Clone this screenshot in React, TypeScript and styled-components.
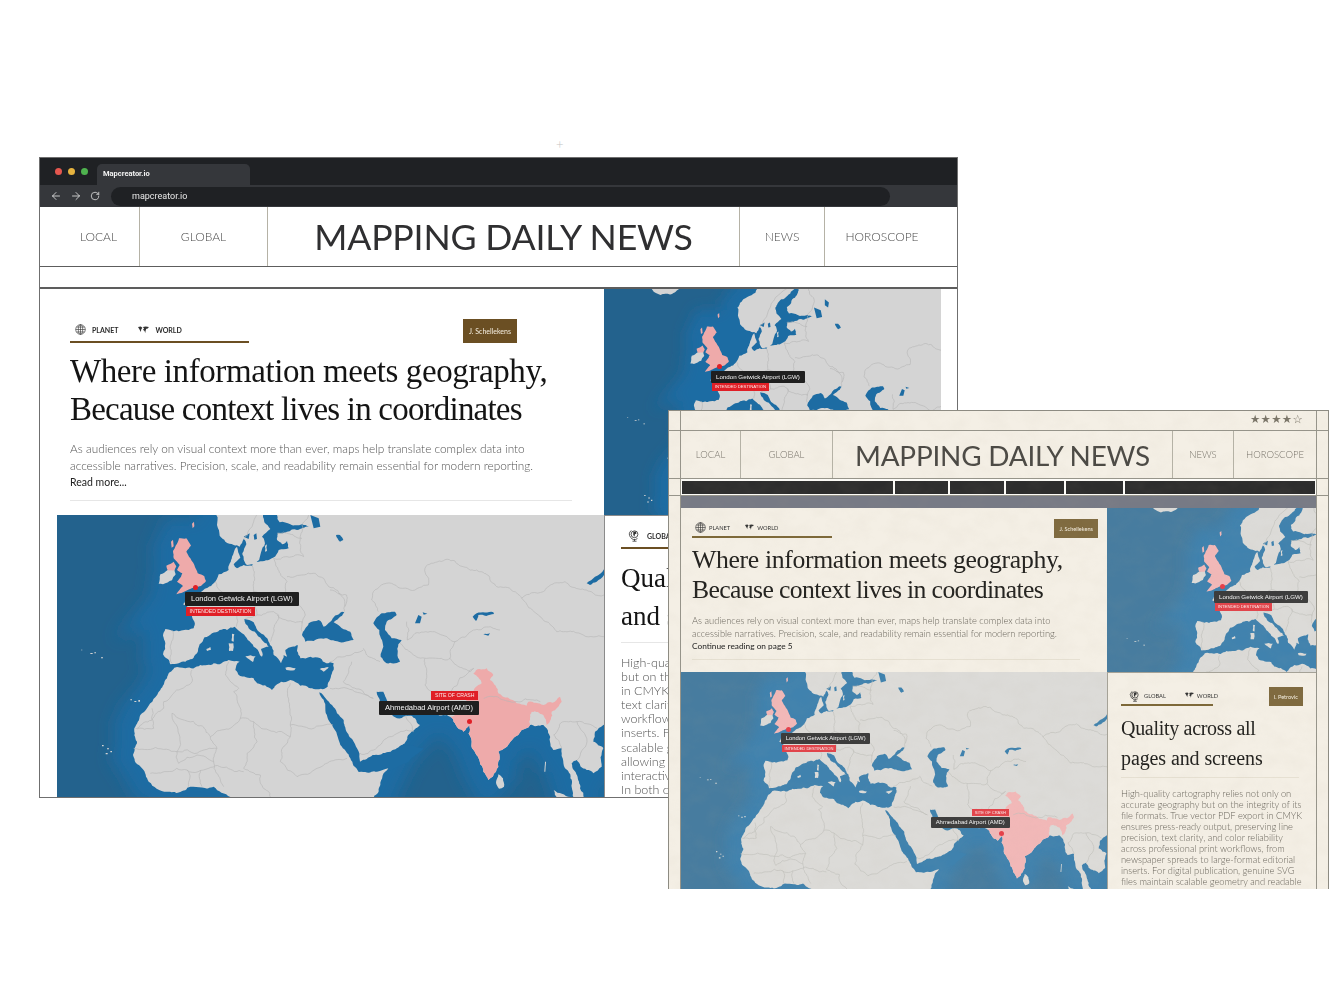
import React, { useId } from "react";
import styled, { createGlobalStyle } from "styled-components";
import { ArrowLeft, ArrowRight, RotateCw } from "lucide-react";

const Global = createGlobalStyle`
  html, body { margin: 0; padding: 0; background: #fff; }
  body { font-family: "Lato", "Liberation Sans", sans-serif; }
`;

/* ---------- map geometry, in one shared drawing space ---------- */
const LAND =
  "M600,-130 L552,-70 L500,-30 L478,0 L480,30 L488,62 L505,80 L530,90 L548,95 L560,72 L568,88 L556,115 L570,150 L596,146 L610,120 L622,92 L615,65 L640,42 L622,22 L618,0 L640,-30 L680,-62 L694,-72 L705,-65 L680,-30 L660,0 L668,22 L700,28 L735,28 L756,34 L720,45 L690,50 L663,55 L660,75 L675,88 L690,78 L695,100 L665,105 L648,128 L605,140 L585,152 L560,150 L540,160 L530,148 L550,128 L540,95 L525,125 L515,165 L485,178 L470,205 L452,218 L425,240 L385,255 L378,268 L398,285 L405,300 L410,340 L395,345 L325,342 L318,362 L325,385 L318,418 L340,448 L365,445 L385,440 L420,415 L428,388 L465,355 L488,345 L510,345 L533,335 L555,355 L590,395 L608,418 L615,425 L612,402 L635,395 L605,365 L575,340 L562,312 L590,322 L625,365 L645,395 L650,420 L672,445 L680,420 L690,425 L685,405 L705,395 L722,390 L720,408 L730,430 L760,425 L790,430 L808,445 L830,445 L826,470 L812,515 L770,522 L730,512 L700,495 L672,500 L645,525 L600,505 L590,490 L545,480 L535,465 L548,440 L515,435 L470,445 L430,450 L385,460 L352,458 L330,490 L310,525 L270,580 L250,600 L232,640 L240,680 L228,720 L255,760 L275,800 L330,830 L400,815 L470,815 L520,846 L560,880 L949,880 L970,810 L994,760 L960,770 L920,770 L905,765 L909,745 L989,715 L1034,692 L1089,630 L1074,610 L1044,590 L1069,600 L1159,600 L1179,605 L1194,625 L1219,650 L1237,630 L1244,680 L1279,770 L1294,795 L1317,770 L1324,710 L1394,645 L1419,630 L1459,630 L1479,680 L1489,705 L1514,700 L1524,760 L1549,846 L1564,880 L1589,880 L1569,820 L1544,745 L1559,735 L1589,765 L1609,775 L1634,755 L1639,700 L1609,680 L1614,650 L1639,630 L1700,620 L1700,-130 Z";

const ISLANDS = [
  "M150,-80 L190,-92 L240,-90 L262,-66 L230,-48 L195,-46 L170,-58 Z",
  "M305,206 L310,178 L332,165 L352,162 L356,178 L345,196 L318,208 Z",
  "M525,356 L532,358 L530,380 L524,378 Z",
  "M515,385 L529,385 L528,408 L516,408 Z",
  "M565,424 L596,424 L588,441 Z",
  "M685,458 L716,460 L712,466 L688,465 Z",
  "M788,462 L815,456 L800,470 Z",
  "M448,402 L460,396 L462,404 L450,408 Z",
  "M1324,778 L1338,790 L1341,815 L1326,821 L1317,802 Z",
  "M566,128 L580,132 L578,146 L566,144 Z",
  "M624,92 L630,88 L630,108 L624,110 Z",
  "M1020,745 L1034,744 L1030,749 Z",
  "M220,553 h5 v3 h-5 Z M232,558 h6 v3 h-6 Z M244,555 h5 v5 h-5 Z",
  "M72,404 h4 v2 h-4 Z M100,414 h7 v3 h-7 Z M112,412 h5 v3 h-5 Z M132,427 h6 v3 h-6 Z",
  "M135,690 h5 v4 h-5 Z M150,700 h6 v3 h-6 Z M146,714 h6 v4 h-6 Z M160,708 h5 v4 h-5 Z",
  "M1464,740 l3,0 l-2,30 l-3,0 Z",
  "M1490,825 L1540,846 L1540,880 L1510,880 Z",
];

const WATER = [
  "M787,532 L825,570 L860,615 L890,680 L909,740 L989,712 L1034,690 L1100,700 L1000,768 L994,756 L920,771 L905,771 L880,730 L850,690 L825,630 L805,580 Z",
  "M959,530 L979,530 L997,565 L1019,590 L1044,590 L1060,598 L1075,604 L1020,610 L989,585 L969,560 Z",
  "M949,325 L974,295 L1014,290 L1019,300 L989,320 L984,345 L1004,370 L1034,375 L1024,388 L1029,440 L989,445 L971,425 L979,395 L967,345 Z",
  "M735,360 L755,325 L785,315 L800,335 L820,320 L855,290 L862,292 L845,310 L830,322 L880,350 L890,375 L860,382 L810,370 L770,378 L745,380 Z",
  "M1074,325 L1084,300 L1094,305 L1089,325 Z M1097,292 L1111,296 L1100,299 Z",
  "M1247,305 L1259,295 L1309,292 L1311,297 L1264,300 L1257,318 Z",
  "M1279,358 L1299,355 L1294,362 Z",
  "M1589,205 L1614,185 L1641,163 L1641,180 L1619,200 L1599,210 Z",
  "M837,60 L849,60 L859,75 L849,80 Z",
  "M560,65 L578,55 L575,72 Z M590,60 L598,55 L600,72 L592,74 Z",
  "M760,0 L785,10 L790,35 L770,40 Z M800,-30 L815,-18 L812,0 L800,-8 Z",
];

const BORDERS = [
  "M345,345 L340,400 L345,445",
  "M475,200 L510,250 L530,270 L538,335",
  "M585,152 L590,230 L575,240 L530,270",
  "M650,130 L690,200 L680,250 L620,235 L590,230",
  "M735,30 L730,70 L740,125 L690,125 L650,130",
  "M690,185 L775,175 L815,215 L860,250 L862,290",
  "M680,250 L720,265 L745,300 L735,325",
  "M660,300 L735,320 L735,350",
  "M600,300 L650,290 L665,300 L650,340 L640,380",
  "M575,240 L600,300 L565,310",
  "M735,28 L760,-30 L740,-70 L750,-130",
  "M560,72 L590,20 L615,-30 L660,-70 L700,-130",
  "M694,-72 L720,-130",
  "M660,55 L735,70",
  "M819,225 L869,240 L864,275",
  "M944,255 L949,230 L1004,205 L1059,225 L1114,210 L1104,160 L1194,138 L1259,165 L1319,215 L1394,250 L1444,300 L1499,350 L1579,360 L1641,365",
  "M1394,250 L1459,230 L1524,200 L1609,235 L1641,240",
  "M944,255 L964,290",
  "M1049,320 L1051,375 L1074,355 L1174,370 L1194,380 L1249,345 L1329,345",
  "M919,400 L929,420 L969,440",
  "M1104,430 L1109,465 L1104,510 L1124,530",
  "M1029,385 L1109,430 L1179,430 L1194,380",
  "M1179,430 L1240,470 L1250,460 L1180,530 L1124,530",
  "M819,440 L919,405",
  "M884,440 L859,500 L949,550",
  "M819,520 L949,550",
  "M909,715 L989,670 L1069,650 L1044,590",
  "M405,465 L405,500 L320,560 L320,580 L240,640",
  "M515,440 L505,480 L545,520 L530,530 L550,610",
  "M700,505 L700,630 L828,630",
  "M590,620 L700,665 L700,630",
  "M460,665 L550,610 L590,620",
  "M345,595 L460,665 L480,700 L360,710 L345,595",
  "M235,640 L290,640 L285,580",
  "M480,700 L470,740 L420,720 L365,745 L360,710",
  "M230,700 L360,710",
  "M700,665 L670,740 L720,785 L780,760 L870,730",
  "M590,620 L600,680 L560,760 L610,780 L640,846",
  "M280,775 L330,770 L390,765 L455,760 L560,770",
  "M390,765 L395,815",
  "M430,765 L435,815",
  "M470,740 L500,815",
  "M1514,700 L1490,660 L1510,625 L1560,620 L1620,640",
  "M1560,620 L1590,680 L1560,735",
  "M1280,550 L1360,560 L1450,560",
];

const UK_PATHS = [
  "M366,70 L388,70 L402,92 L388,110 L396,125 L412,150 L422,175 L442,184 L447,198 L432,213 L397,223 L358,238 L378,213 L360,200 L372,185 L376,175 L360,165 L368,150 L350,130 L348,108 L356,92 Z",
  "M328,152 L350,140 L358,154 L352,166 L332,166 Z",
];
const UK_ISLES = "M342,80 l6,-6 l2,20 l-6,4 Z M405,26 l6,-6 l1,14 l-5,6 Z";

const INDIA =
  "M1289,460 L1309,480 L1299,495 L1324,535 L1379,565 L1409,572 L1414,560 L1459,570 L1509,545 L1514,560 L1484,590 L1469,630 L1459,600 L1424,590 L1419,630 L1394,645 L1324,710 L1317,770 L1294,795 L1279,770 L1244,680 L1237,630 L1219,650 L1194,625 L1179,605 L1194,600 L1214,595 L1204,590 L1249,530 L1274,505 L1249,475 Z";

/* Breaks a straight outline into a natural, irregular coastline. */
function hash(a: number, b: number, c: number, d: number) {
  const s = Math.sin(a * 12.9898 + b * 78.233 + c * 37.719 + d * 4.581) * 43758.5453;
  return s - Math.floor(s) - 0.5;
}

function fractal(ax: number, ay: number, bx: number, by: number, out: number[][], amp: number) {
  const dx = bx - ax;
  const dy = by - ay;
  const len = Math.hypot(dx, dy);
  if (len < 9 || len > 400) {
    out.push([bx, by]);
    return;
  }
  const flip = ax < bx || (ax === bx && ay < by);
  const h = flip ? hash(ax, ay, bx, by) : hash(bx, by, ax, ay);
  const off = (flip ? h : -h) * len * amp;
  const mx = (ax + bx) / 2 - (dy / len) * off;
  const my = (ay + by) / 2 + (dx / len) * off;
  fractal(ax, ay, mx, my, out, amp);
  fractal(mx, my, bx, by, out, amp);
}

const toPoints = (d: string) =>
  d
    .replace(/[MLZ]/g, " ")
    .trim()
    .split(/\s+/)
    .map((p) => p.split(",").map(Number));

const toPath = (pts: number[][]) =>
  "M" + pts.map((p) => `${p[0].toFixed(1)},${p[1].toFixed(1)}`).join(" L");

function coast(d: string, amp = 0.28) {
  const pts = toPoints(d);
  const out: number[][] = [pts[0]];
  const closed = [...pts, pts[0]];
  for (let i = 0; i < closed.length - 1; i++) {
    fractal(closed[i][0], closed[i][1], closed[i + 1][0], closed[i + 1][1], out, amp);
  }
  return toPath(out) + " Z";
}

const isPlain = (d: string) => !/[hvl]/.test(d) && d.indexOf("M", 1) < 0;
const shaped = (d: string) => (isPlain(d) ? coast(d, 0.2) : d);

const LAND_D = coast(LAND);
const INDIA_D = coast(INDIA);
const UK_D = UK_PATHS.map((d) => coast(d, 0.12)).join(" ") + " " + UK_ISLES;
const ISLANDS_D = ISLANDS.map(shaped);
const WATER_D = WATER.map(shaped);
const BORDERS_D = BORDERS.map((d) => {
  const pts = toPoints(d);
  const out: number[][] = [pts[0]];
  for (let i = 0; i < pts.length - 1; i++) fractal(pts[i][0], pts[i][1], pts[i + 1][0], pts[i + 1][1], out, 0.28);
  return toPath(out);
});

const palettes = {
  screen: { deep: "#23628d", shelf: "#1d6ca3", land: "#d4d4d4", line: "#b6b6b6", pink: "#eeaaaa" },
  print: { deep: "#477c9f", shelf: "#3f82ae", land: "#dcdbd8", line: "#c0bfbb", pink: "#f2b8b8" },
};

type MapArtProps = { view: string; tone: keyof typeof palettes };

function MapArt({ view, tone }: MapArtProps) {
  const id = useId();
  const c = palettes[tone];
  return (
    <MapSvg viewBox={view} preserveAspectRatio="xMinYMin slice">
      <defs>
        <filter id={id} x="-20%" y="-20%" width="140%" height="140%">
          <feGaussianBlur stdDeviation="24" />
        </filter>
      </defs>
      <rect x="-200" y="-200" width="2100" height="1300" fill={c.deep} />
      <g filter={`url(#${id})`} stroke={c.shelf} strokeWidth="120" fill={c.shelf}>
        <path d={LAND} />
        <path d={UK_PATHS[0]} />
      </g>
      <path d={LAND_D} fill={c.land} />
      {ISLANDS_D.map((d) => (
        <path key={d} d={d} fill={c.land} />
      ))}
      {WATER_D.map((d) => (
        <path key={d} d={d} fill={c.shelf} />
      ))}
      <path d={INDIA_D} fill={c.pink} />
      <path d={UK_D} fill={c.pink} />
      <g fill="none" stroke={c.line} strokeLinejoin="round">
        {BORDERS_D.map((d) => (
          <path key={d} d={d} vectorEffect="non-scaling-stroke" strokeWidth="0.6" />
        ))}
      </g>
    </MapSvg>
  );
}

/* ---------- small drawn icons ---------- */
const GlobeIcon = ({ size }: { size: number }) => (
  <svg width={size} height={size} viewBox="0 0 16 16" fill="none" stroke="#333" strokeWidth="0.9">
    <circle cx="8" cy="8" r="7" />
    <ellipse cx="8" cy="8" rx="3.2" ry="7" />
    <path d="M8 1v14M1 8h14M2 4.5h12M2 11.5h12" />
  </svg>
);

const WorldIcon = ({ size }: { size: number }) => (
  <svg width={size} height={size * 0.7} viewBox="0 0 20 14" fill="#333">
    <path d="M0 2l5-1 3 2-2 3-1 5-2-4zM9 2l5-1 6 1-3 3-2 0-1 3-1 5-1-4-3-2 2-2z" />
  </svg>
);

const DeskGlobeIcon = ({ size }: { size: number }) => (
  <svg width={size} height={size} viewBox="0 0 16 16" fill="none" stroke="#333" strokeWidth="1">
    <circle cx="8" cy="6.5" r="4.2" />
    <path d="M4 1.8a6.3 6.3 0 0 0 7.6 10M8 12.8v2M5.5 15h5" />
    <path d="M6.5 3.5l3-.5 1 2.5-2 1-.5 3-1.5-2z" fill="#333" stroke="none" />
  </svg>
);

const PaperGrain = () => {
  const id = useId();
  return (
    <GrainLayer aria-hidden="true">
      <filter id={id}>
        <feTurbulence type="fractalNoise" baseFrequency="0.05 0.07" numOctaves="4" seed="7" />
        <feColorMatrix values="0 0 0 0 0.45  0 0 0 0 0.40  0 0 0 0 0.30  0.9 0 0 0 -0.32" />
      </filter>
      <rect width="100%" height="100%" filter={`url(#${id})`} />
    </GrainLayer>
  );
};

/* ---------- stage ---------- */
const Stage = styled.div`
  position: relative;
  width: 1342px;
  height: 1000px;
  overflow: hidden;
  background: #fff;
`;

const PlusMark = styled.span`
  position: absolute;
  left: 556px;
  top: 136px;
  font: 300 13px/16px "Lato", sans-serif;
  color: #c4c4c4;
`;

const BrowserWindow = styled.section`
  position: absolute;
  left: 39px;
  top: 157px;
  width: 919px;
  height: 641px;
  box-sizing: border-box;
  overflow: hidden;
  background: #fff;
  border: 1px solid #6f6f6f;
  display: flex;
  flex-direction: column;
  filter: blur(0.3px);
`;

const PrintSheet = styled.section`
  position: absolute;
  left: 668px;
  top: 410px;
  width: 661px;
  height: 479px;
  box-sizing: border-box;
  overflow: hidden;
  background: #f4efe5;
  border: 1px solid #8d8b82;
  border-bottom: none;
  display: grid;
  grid-template-columns: 12px 635px 12px;
  grid-template-rows: 20px 48px 17px 1fr;
  filter: blur(0.3px);
`;

const GrainLayer = styled.svg`
  position: absolute;
  inset: 0;
  width: 100%;
  height: 100%;
  pointer-events: none;
  opacity: 0.12;
`;

/* ---------- browser chrome ---------- */
const TabStrip = styled.div`
  height: 27px;
  flex: none;
  background: #1f2124;
  display: flex;
  align-items: flex-end;
  padding-left: 57px;
  position: relative;
`;

const Lights = styled.div`
  position: absolute;
  left: 14.5px;
  top: 9.5px;
  display: flex;
  gap: 5.5px;
`;

const Light = styled.i<{ $c: string }>`
  width: 7.5px;
  height: 7.5px;
  border-radius: 50%;
  background: ${(p) => p.$c};
`;

const Tab = styled.div`
  width: 153px;
  height: 21px;
  box-sizing: border-box;
  padding-left: 6px;
  background: #35373b;
  border-radius: 5px 5px 0 0;
  font: 700 7.5px/19px "Roboto", "Liberation Sans", sans-serif;
  color: #f2f2f2;
`;

const ToolBar = styled.div`
  height: 22px;
  flex: none;
  box-sizing: border-box;
  background: #35373b;
  display: flex;
  align-items: center;
  padding: 0 67px 0 10px;
  gap: 8px;
  color: #e8e8e8;
`;

const AddressBar = styled.div`
  flex: 1;
  height: 19px;
  margin-left: 3px;
  border-radius: 10px;
  background: #1f2124;
  padding-left: 21px;
  font: 400 9px/19px "Roboto", "Liberation Sans", sans-serif;
  color: #e8e8e8;
`;

/* ---------- masthead ---------- */
const NavBand = styled.header<{ $print?: boolean }>`
  display: grid;
  grid-template-columns: ${(p) =>
    p.$print ? "59px 92px 340px 61px 83px" : "99px 128px 472px 85px 133px"};
  height: ${(p) => (p.$print ? "47px" : "59px")};
  flex: none;
  border-bottom: 1px solid ${(p) => (p.$print ? "#96948a" : "#5d5d5d")};
`;

const NavCell = styled.div<{ $print?: boolean; $shift?: string }>`
  display: flex;
  align-items: center;
  justify-content: center;
  padding: ${(p) => p.$shift ?? "0"};
  font-weight: 300;
  font-size: ${(p) => (p.$print ? "9.5px" : "12px")};
  color: ${(p) => (p.$print ? "#77736a" : "#4c4c4c")};
  & + & {
    border-left: 1px solid ${(p) => (p.$print ? "#b5b2a6" : "#a5a5a5")};
  }
`;

const Masthead = styled(NavCell)<{ $print?: boolean }>`
  font-weight: 400;
  font-size: ${(p) => (p.$print ? "27.9px" : "35.7px")};
  color: ${(p) => (p.$print ? "#4c4a45" : "#2f2f31")};
  letter-spacing: -0.2px;
  white-space: nowrap;
`;

const EmptyStrip = styled.div`
  height: 20px;
  flex: none;
  border-bottom: 2px solid #5d5d5d;
`;

/* ---------- browser page ---------- */
const ScreenPage = styled.main`
  flex: 1;
  min-height: 0;
  display: grid;
  grid-template-columns: 564px 1fr;
  grid-template-rows: 226px 1fr;
`;

const UpperMapBay = styled.div`
  padding-right: 16px;
  box-sizing: border-box;
  min-width: 0;
  min-height: 0;
`;

const LowerMapBay = styled.div`
  padding-left: 17px;
  min-width: 0;
  min-height: 0;
`;

/* ---------- print page ---------- */
const SpineCell = styled.div<{ $right?: boolean; $open?: boolean }>`
  ${(p) => (p.$right ? "border-left" : "border-right")}: 1px solid #96948a;
  ${(p) => (p.$open ? "" : "border-bottom: 1px solid #96948a;")}
`;

const RatingBand = styled.div`
  border-bottom: 1px solid #96948a;
  display: flex;
  align-items: center;
  justify-content: flex-end;
  padding: 0 13px 2px 0;
  font: 400 11.5px/1 "DejaVu Sans", sans-serif;
  letter-spacing: 0.3px;
  color: #7a7568;
`;

const BarBand = styled.div`
  display: flex;
  gap: 2px;
  padding: 2px 1px 1px;
  border-bottom: 1px solid #96948a;
  background: #fdfcf8;
`;

const InkBar = styled.i<{ $w: number }>`
  display: block;
  height: 13px;
  flex: ${(p) => p.$w} 0 0;
  background: #2d2d2d;
`;

const PrintBody = styled.div`
  min-height: 0;
  display: flex;
  flex-direction: column;
`;

const GreyBand = styled.div`
  height: 12px;
  flex: none;
  background: #777a85;
`;

const PrintGrid = styled.div`
  flex: 1;
  min-height: 0;
  display: grid;
  grid-template-columns: 426px 1fr;
  grid-template-rows: 164px 1fr;
`;

/* ---------- map ---------- */
const MapFrame = styled.figure`
  position: relative;
  margin: 0;
  width: 100%;
  height: 100%;
  overflow: hidden;
`;

const MapSvg = styled.svg`
  display: block;
  width: 100%;
  height: 100%;
`;

const PinDot = styled.span<{ $x: number; $y: number; $print?: boolean }>`
  position: absolute;
  left: ${(p) => p.$x}px;
  top: ${(p) => p.$y}px;
  width: 0;
  height: 0;
  &::before {
    content: "";
    position: absolute;
    left: -2.5px;
    top: -2.5px;
    width: 5px;
    height: 5px;
    border-radius: 50%;
    background: ${(p) => (p.$print ? "#e5404a" : "#e01f26")};
  }
`;

const Callout = styled.span<{ $above?: boolean; $left: number; $gap: number }>`
  position: absolute;
  display: flex;
  white-space: nowrap;
  ${(p) =>
    p.$above
      ? `flex-direction: column-reverse; align-items: flex-end; right: ${p.$left}px; bottom: ${p.$gap}px;`
      : `flex-direction: column; align-items: flex-start; left: ${p.$left}px; top: ${p.$gap}px;`}
`;

const PlaceName = styled.span<{ $f: number; $print?: boolean }>`
  font: 400 ${(p) => p.$f}px/${(p) => p.$f * 1.87}px "Liberation Sans", sans-serif;
  padding: 0 ${(p) => p.$f * 0.8}px;
  color: #f5f5f5;
  background: ${(p) => (p.$print ? "#3c3c3c" : "#1f1f1f")};
  border-radius: 1px;
`;

const PlaceTag = styled.span<{ $f: number; $print?: boolean }>`
  font: 400 ${(p) => p.$f * 0.69}px/${(p) => p.$f * 1.2}px "Liberation Sans", sans-serif;
  padding: 0 ${(p) => p.$f * 0.5}px;
  margin: ${(p) => p.$f * 0.12}px ${(p) => p.$f * 0.1}px;
  color: #fbe9e9;
  background: ${(p) => (p.$print ? "#e2434a" : "#e01f26")};
`;

type PinProps = { x: number; y: number; f: number; name: string; tag: string; above?: boolean; left: number; gap: number; print?: boolean };

const Pin = ({ x, y, f, name, tag, above, left, gap, print }: PinProps) => (
  <PinDot $x={x} $y={y} $print={print}>
    <Callout $above={above} $left={left} $gap={gap}>
      <PlaceName $f={f} $print={print}>{name}</PlaceName>
      <PlaceTag $f={f} $print={print}>{tag}</PlaceTag>
    </Callout>
  </PinDot>
);

/* ---------- articles ---------- */
const Story = styled.article<{ $pad: string; $rule?: string }>`
  box-sizing: border-box;
  padding: ${(p) => p.$pad};
  min-width: 0;
  min-height: 0;
  overflow: hidden;
  ${(p) => (p.$rule ? `border-left: 1px solid ${p.$rule}; border-top: 1px solid ${p.$rule};` : "")}
`;

const MetaRow = styled.div<{ $inset: number }>`
  display: flex;
  justify-content: space-between;
  align-items: flex-end;
  margin-right: ${(p) => p.$inset}px;
`;

const MetaTags = styled.div<{ $w: number; $lead?: number; $print?: boolean }>`
  display: flex;
  align-items: center;
  flex: none;
  width: ${(p) => p.$w}px;
  box-sizing: border-box;
  height: ${(p) => (p.$print ? "19px" : "25px")};
  padding-left: ${(p) => p.$lead ?? (p.$print ? 3 : 5)}px;
  border-bottom: 2px solid ${(p) => (p.$print ? "#7d6838" : "#6b4f23")};
  gap: ${(p) => (p.$print ? "3px" : "6px")};
  white-space: nowrap;
  svg {
    flex: none;
  }
`;

const MetaLabel = styled.span<{ $print?: boolean; $after?: number }>`
  font-size: ${(p) => (p.$print ? "5.7px" : "7px")};
  font-weight: ${(p) => (p.$print ? 400 : 700)};
  color: ${(p) => (p.$print ? "#333" : "#2c2c2c")};
  margin-right: ${(p) => p.$after ?? (p.$print ? 12 : 14)}px;
  &:last-child {
    margin-right: 0;
  }
`;

const Byline = styled.span<{ $print?: boolean }>`
  flex: none;
  height: ${(p) => (p.$print ? "19px" : "24px")};
  padding: 0 ${(p) => (p.$print ? "5px" : "6px")};
  display: flex;
  align-items: center;
  font-size: ${(p) => (p.$print ? "5.6px" : "7px")};
  color: #f4eee0;
  background: ${(p) => (p.$print ? "#7f6a3f" : "#6b4f23")};
`;

const Headline = styled.h2<{ $f: number; $lh: number; $top: number; $print?: boolean }>`
  margin: ${(p) => p.$top}px 0 0;
  font: 400 ${(p) => p.$f}px/${(p) => p.$lh}px "Liberation Serif", serif;
  color: ${(p) => (p.$print ? "#242320" : "#141414")};
  white-space: nowrap;
`;

const HeadlineLine = styled.span<{ $track: number }>`
  display: block;
  letter-spacing: ${(p) => p.$track}px;
`;

const Lede = styled.p<{ $f: number; $lh: number; $top: number; $w: number; $print?: boolean }>`
  margin: ${(p) => p.$top}px 0 0;
  width: ${(p) => p.$w}px;
  font-weight: 300;
  font-size: ${(p) => p.$f}px;
  line-height: ${(p) => p.$lh}px;
  color: ${(p) => (p.$print ? "#6a665d" : "#555")};
`;

const ReadOn = styled.a<{ $f: number; $lh: number }>`
  display: block;
  font-size: ${(p) => p.$f}px;
  line-height: ${(p) => p.$lh}px;
  color: #222;
`;

const Hairline = styled.hr<{ $top: number; $w: number; $print?: boolean }>`
  margin: ${(p) => p.$top}px 0 0;
  width: ${(p) => p.$w}px;
  height: 1px;
  border: none;
  background: ${(p) => (p.$print ? "#e6e0d2" : "#e6e6e6")};
`;

const LEDE = (
  <>
    As audiences rely on visual context more than ever, maps help translate complex data into
    accessible narratives. Precision, scale, and readability remain essential for modern reporting.
  </>
);

const AIRPORT_A = "London Getwick Airport (LGW)";
const AIRPORT_B = "Ahmedabad Airport (AMD)";

export default function App() {
  return (
    <Stage>
      <Global />
      <PlusMark>+</PlusMark>

      <BrowserWindow>
        <TabStrip>
          <Lights>
            <Light $c="#e5574f" />
            <Light $c="#e6b33f" />
            <Light $c="#4fb34f" />
          </Lights>
          <Tab>Mapcreator.io</Tab>
        </TabStrip>
        <ToolBar>
          <ArrowLeft size={12} strokeWidth={1.6} />
          <ArrowRight size={12} strokeWidth={1.6} />
          <RotateCw size={10} strokeWidth={1.8} />
          <AddressBar>mapcreator.io</AddressBar>
        </ToolBar>
        <NavBand>
          <NavCell $shift="0 0 0 18px">LOCAL</NavCell>
          <NavCell>GLOBAL</NavCell>
          <Masthead>MAPPING DAILY NEWS</Masthead>
          <NavCell>NEWS</NavCell>
          <NavCell $shift="0 18px 0 0">HOROSCOPE</NavCell>
        </NavBand>
        <EmptyStrip />
        <ScreenPage>
          <Story $pad="29px 32px 0 30px">
            <MetaRow $inset={55}>
              <MetaTags $w={179}>
                <GlobeIcon size={11} />
                <MetaLabel>PLANET</MetaLabel>
                <WorldIcon size={11} />
                <MetaLabel>WORLD</MetaLabel>
              </MetaTags>
              <Byline>J. Schellekens</Byline>
            </MetaRow>
            <Headline $f={33} $lh={38} $top={9}>
              <HeadlineLine $track={-0.4}>Where information meets geography,</HeadlineLine>
              <HeadlineLine $track={-0.79}>Because context lives in coordinates</HeadlineLine>
            </Headline>
            <Lede $f={11.8} $lh={16.5} $top={13} $w={480}>
              {LEDE}
            </Lede>
            <ReadOn $f={10.5} $lh={17}>Read more...</ReadOn>
            <Hairline $top={9} $w={502} />
          </Story>
          <UpperMapBay>
            <MapFrame>
              <MapArt view="-13 -68 1251 832" tone="screen" />
              <Pin x={115} y={77} f={6.2} name={AIRPORT_A} tag="INTENDED DESTINATION" left={-8} gap={5} />
            </MapFrame>
          </UpperMapBay>
          <LowerMapBay>
            <MapFrame>
              <MapArt view="0 0 1641 846" tone="screen" />
              <Pin x={138} y={72} f={7.5} name={AIRPORT_A} tag="INTENDED DESTINATION" left={-10} gap={5} />
              <Pin x={412} y={206} f={7.5} name={AIRPORT_B} tag="SITE OF CRASH" above left={-10} gap={6} />
            </MapFrame>
          </LowerMapBay>
          <Story $pad="8px 16px 0 16px" $rule="#8b8b8b">
            <MetaRow $inset={0}>
              <MetaTags $w={120} $lead={7}>
                <DeskGlobeIcon size={13} />
                <MetaLabel>GLOBAL</MetaLabel>
                <WorldIcon size={11} />
                <MetaLabel>WORLD</MetaLabel>
              </MetaTags>
              <Byline>I. Petrovic</Byline>
            </MetaRow>
            <Headline $f={27} $lh={38} $top={10}>
              <HeadlineLine $track={0}>Quality across all</HeadlineLine>
              <HeadlineLine $track={0}>and screens</HeadlineLine>
            </Headline>
            <Hairline $top={7} $w={300} />
            <Lede $f={12.5} $lh={14.1} $top={13} $w={345}>
              High-quality cartography relies not only on accurate geography
              <br />
              but on the integrity of its file formats. True vector PDF export
              <br />
              in CMYK ensures press-ready output, preserving line precision,
              <br />
              text clarity, and color reliability across professional print
              <br />
              workflows, from newspaper spreads to large-format editorial
              <br />
              inserts. For digital publication, genuine SVG files maintain
              <br />
              scalable geometry and readable type at any zoom level,
              <br />
              allowing responsive layouts and crisp rendering for
              <br />
              interactive stories on every kind of screen.
              <br />
              In both cases, the map stays true to its source.
            </Lede>
          </Story>
        </ScreenPage>
      </BrowserWindow>

      <PrintSheet>
        <SpineCell />
        <RatingBand>★★★★☆</RatingBand>
        <SpineCell $right />
        <SpineCell />
        <NavBand $print>
          <NavCell $print>LOCAL</NavCell>
          <NavCell $print>GLOBAL</NavCell>
          <Masthead $print>MAPPING DAILY NEWS</Masthead>
          <NavCell $print>NEWS</NavCell>
          <NavCell $print>HOROSCOPE</NavCell>
        </NavBand>
        <SpineCell $right />
        <SpineCell />
        <BarBand>
          <InkBar $w={211} />
          <InkBar $w={53} />
          <InkBar $w={53} />
          <InkBar $w={58} />
          <InkBar $w={57} />
          <InkBar $w={190} />
        </BarBand>
        <SpineCell $right />
        <SpineCell $open />
        <PrintBody>
          <GreyBand />
          <PrintGrid>
            <Story $pad="11px 9px 0 11px">
              <MetaRow $inset={0}>
                <MetaTags $w={140} $print>
                  <GlobeIcon size={11} />
                  <MetaLabel $print>PLANET</MetaLabel>
                  <WorldIcon size={9} />
                  <MetaLabel $print>WORLD</MetaLabel>
                </MetaTags>
                <Byline $print>J. Schellekens</Byline>
              </MetaRow>
              <Headline $f={25.7} $lh={30} $top={7} $print>
                <HeadlineLine $track={-0.33}>Where information meets geography,</HeadlineLine>
                <HeadlineLine $track={-0.63}>Because context lives in coordinates</HeadlineLine>
              </Headline>
              <Lede $f={9.3} $lh={13} $top={9} $w={370} $print>
                {LEDE}
              </Lede>
              <ReadOn $f={8.3} $lh={13}>Continue reading on page 5</ReadOn>
              <Hairline $top={6} $w={388} $print />
            </Story>
            <MapFrame>
              <MapArt view="2 -62 748 587" tone="print" />
              <Pin x={115} y={78} f={6.2} name={AIRPORT_A} tag="INTENDED DESTINATION" left={-8} gap={5} print />
            </MapFrame>
            <MapFrame>
              <MapArt view="0 0 1641 846" tone="print" />
              <Pin x={107} y={57} f={5.9} name={AIRPORT_A} tag="INTENDED DESTINATION" left={-7} gap={4} print />
              <Pin x={320.5} y={161} f={5.9} name={AIRPORT_B} tag="SITE OF CRASH" above left={-8} gap={5} print />
            </MapFrame>
            <Story $pad="14px 13px 0 13px" $rule="#a5a297">
              <MetaRow $inset={0}>
                <MetaTags $w={92} $lead={8} $print>
                  <DeskGlobeIcon size={12} />
                  <MetaLabel $print $after={16}>GLOBAL</MetaLabel>
                  <WorldIcon size={9} />
                  <MetaLabel $print>WORLD</MetaLabel>
                </MetaTags>
                <Byline $print>I. Petrovic</Byline>
              </MetaRow>
              <Headline $f={20} $lh={30} $top={7} $print>
                <HeadlineLine $track={-0.3}>Quality across all</HeadlineLine>
                <HeadlineLine $track={-0.1}>pages and screens</HeadlineLine>
              </Headline>
              <Hairline $top={4} $w={178} $print />
              <Lede $f={9.3} $lh={11} $top={10} $w={184} $print>
                High-quality cartography relies not only on accurate geography but on the integrity of its
                file formats. True vector PDF export in CMYK ensures press-ready output, preserving line
                precision, text clarity, and color reliability across professional print workflows, from
                newspaper spreads to large-format editorial inserts. For digital publication, genuine SVG
                files maintain scalable geometry and readable
              </Lede>
            </Story>
          </PrintGrid>
        </PrintBody>
        <SpineCell $right $open />
        <PaperGrain />
      </PrintSheet>
    </Stage>
  );
}
